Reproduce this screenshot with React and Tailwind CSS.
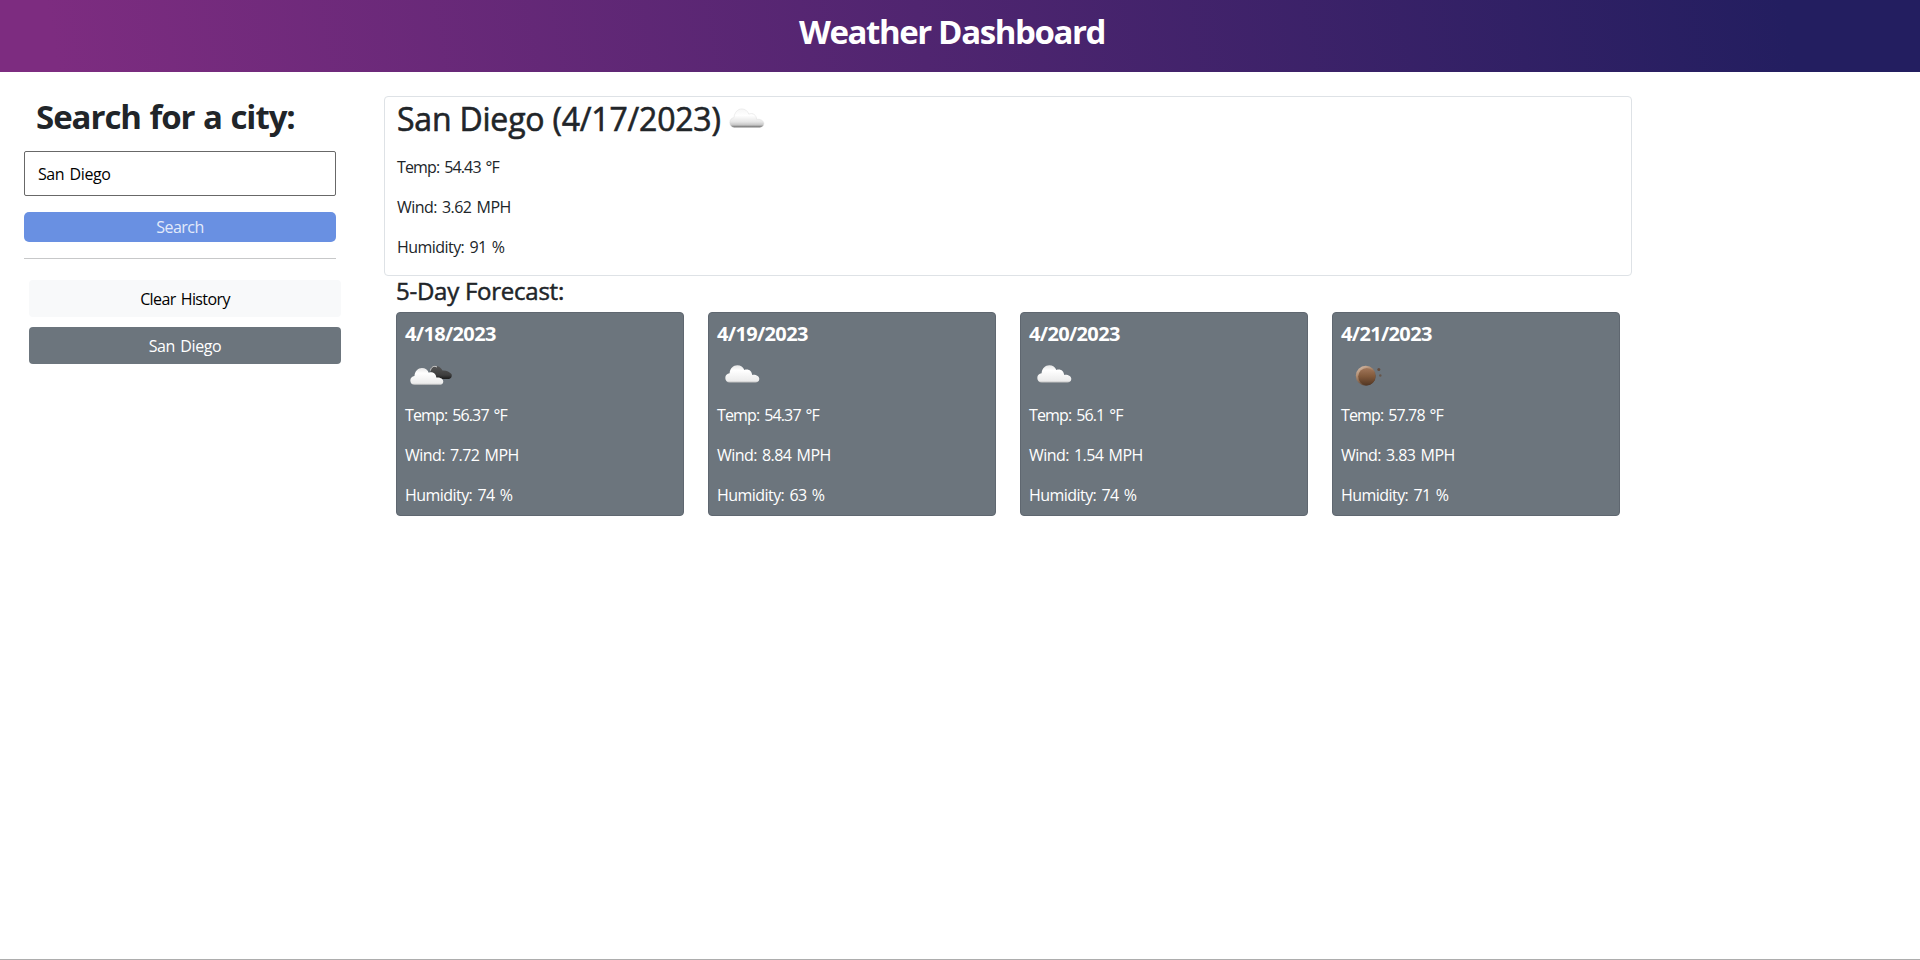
import React from "react";

const forecast = [
  { date: "4/18/2023", icon: "broken", temp: "56.37", wind: "7.72", humidity: "74" },
  { date: "4/19/2023", icon: "cloud", temp: "54.37", wind: "8.84", humidity: "63" },
  { date: "4/20/2023", icon: "cloud", temp: "56.1", wind: "1.54", humidity: "74" },
  { date: "4/21/2023", icon: "night", temp: "57.78", wind: "3.83", humidity: "71" },
];

const CLOUD =
  "M4.5 17.5 C1.8 17.5 0 15.6 0 13 C0 10.4 1.8 8.7 4.3 8.4 C4.6 3.6 8 .4 12 .4 C15.4 .4 18 2.4 19 5.2 C23 3.6 26.6 6 26.8 10 C31 9.6 34 11.4 34 14 C34 16.2 32.4 17.5 30 17.5 Z";

function CloudDefs({ id }) {
  return (
    <defs>
      <linearGradient id={id} x1="0" y1="0" x2="0" y2="1">
        <stop offset="0" stopColor="#f6f6f6" />
        <stop offset="0.35" stopColor="#ffffff" />
        <stop offset="0.7" stopColor="#e6e6e6" />
        <stop offset="0.87" stopColor="#c6c6c6" />
        <stop offset="1" stopColor="#606060" />
      </linearGradient>
      <linearGradient id={id + "-dark"} x1="0" y1="0" x2="0" y2="1">
        <stop offset="0" stopColor="#555555" />
        <stop offset="0.7" stopColor="#3e3e3e" />
        <stop offset="1" stopColor="#1b1b1b" />
      </linearGradient>
      <linearGradient id={id + "-lit"} x1="0" y1="0" x2="0" y2="1">
        <stop offset="0" stopColor="#e6e6e6" />
        <stop offset="0.3" stopColor="#ffffff" />
        <stop offset="0.9" stopColor="#ececec" />
        <stop offset="1" stopColor="#c4c4c4" />
      </linearGradient>
      <linearGradient id={id + "-moon"} x1="0" y1="0" x2="0" y2="1">
        <stop offset="0" stopColor="#a1765a" />
        <stop offset="0.5" stopColor="#80583a" />
        <stop offset="1" stopColor="#533724" />
      </linearGradient>
      <linearGradient id={id + "-rim"} x1="0" y1="0" x2="0.6" y2="1">
        <stop offset="0" stopColor="#e3cdbd" />
        <stop offset="0.45" stopColor="#a98467" />
        <stop offset="1" stopColor="#4b3629" />
      </linearGradient>
    </defs>
  );
}

function WeatherIcon({ kind, id }) {
  return (
    <svg className="block h-[50px] w-[50px]" viewBox="0 0 50 50">
      <CloudDefs id={id} />
      {kind === "broken" && (
        <g>
          <path d="M26 24 C24.500 18 27 15 30.500 16 C34 16 36 18 37.500 20.500 C41 20 44.500 22 46.500 24 C47.500 27 45.500 29 43 29 L33 29 Z" fill={"url(#" + id + "-dark)"} />
          <path d="M25.500 20.500 C26 17 29 15.300 32 17" fill="none" stroke="#d8d8d8" strokeWidth="1" />
          <path d={CLOUD} transform="translate(5.300 17.700) scale(.97 .98)" fill={"url(#" + id + "-lit)"} />
        </g>
      )}
      {kind === "cloud" && (
        <path d={CLOUD} transform="translate(8.300 14.900)" fill={"url(#" + id + "-lit)"} />
      )}
      {kind === "shaded" && (
        <path d={CLOUD} transform="translate(6.800 14.500) scale(1 1.080)" fill={"url(#" + id + ")"} stroke="#d9d9d9" strokeWidth=".4" />
      )}
      {kind === "night" && (
        <g>
          <circle cx="24.800" cy="25.800" r="10" fill={"url(#" + id + "-rim)"} />
          <circle cx="25.800" cy="26.600" r="8.600" fill={"url(#" + id + "-moon)"} />
          <circle cx="37.800" cy="19.500" r="1.500" fill="#634b3c" />
          <circle cx="39.300" cy="25.500" r="1.200" fill="#66564b" />
        </g>
      )}
    </svg>
  );
}

function Reading({ label, value, className }) {
  return (
    <p className={"h-10 whitespace-nowrap text-[16px] leading-6 [word-spacing:1.5px] " + className}>
      {label}: {value}
    </p>
  );
}

function Readings({ temp, wind, humidity }) {
  return (
    <div>
      <Reading label="Temp" value={temp + " °F"} className="tracking-[-0.85px]" />
      <Reading label="Wind" value={wind + " MPH"} className="tracking-[-0.55px]" />
      <Reading label="Humidity" value={humidity + " %"} className="tracking-[-0.55px]" />
    </div>
  );
}

function ForecastCard({ day, index }) {
  return (
    <article className="h-[204px] w-[288px] rounded-[4px] border border-[#5f6770] bg-[#6c757d] px-2 pt-[9px] text-white">
      <h4 className="text-[20px] font-bold leading-6 tracking-[-0.65px]">{day.date}</h4>
      <div className="mt-[4px] h-[53px]">
        <WeatherIcon kind={day.icon} id={"day" + index} />
      </div>
      <Readings temp={day.temp} wind={day.wind} humidity={day.humidity} />
    </article>
  );
}

export default function App() {
  return (
    <div className="flex h-[960px] w-[1920px] flex-col overflow-hidden border-b border-[#adadad] bg-white font-['Open_Sans','Noto_Sans',sans-serif] text-[#212529]">
      <header className="flex h-[72px] shrink-0 justify-center bg-[linear-gradient(80deg,#7d2c80_3%,#231e60_93%)] pt-[11px]">
        <h1 className="-ml-4 whitespace-nowrap text-[33px] font-bold leading-[42px] tracking-[-1.4px] text-white">Weather Dashboard</h1>
      </header>
      <div className="flex">
        <aside className="w-[384px] shrink-0 pl-6 pt-6">
          <h2 className="h-[55px] whitespace-nowrap pl-3 text-[33px] font-bold leading-[42px] tracking-[-1.05px] [word-spacing:1px]">Search for a city:</h2>
          <input
            className="block h-[45px] w-[312px] rounded-[2px] border border-[#686868] bg-white px-[13px] text-[16px] tracking-[-0.4px] [word-spacing:1.5px] text-black outline-none"
            defaultValue="San Diego"
          />
          <button className="mt-4 block h-[30px] w-[312px] rounded-[5px] bg-[#6990e2] text-[16px] leading-[30px] tracking-[-0.5px] text-[#e3eafa]">Search</button>
          <hr className="mt-4 w-[312px] border-t border-[#c7c8c9]" />
          <div className="ml-[5px] mt-[21px] flex w-[312px] flex-col gap-[10px] text-[16px]">
            <button className="h-[37px] rounded-[4px] bg-[#f8f9fa] pt-px tracking-[-0.6px] [word-spacing:1.5px] text-black">Clear History</button>
            <button className="h-[37px] rounded-[4px] bg-[#6c757d] pt-px tracking-[-0.4px] [word-spacing:1.5px] text-white">San Diego</button>
          </div>
        </aside>
        <main className="w-[1248px] pt-6">
          <section className="h-[180px] rounded-[4px] border border-[#dee2e6] px-3">
            <div className="flex h-[58px] items-start">
              <h2 className="mt-[3px] w-[326px] whitespace-nowrap text-[32px] leading-[38px] tracking-[-0.2px] [-webkit-text-stroke:0.6px_#212529]">San Diego (4/17/2023)</h2>
              <div className="-mt-[3px]">
                <WeatherIcon kind="shaded" id="today" />
              </div>
            </div>
            <Readings temp="54.43" wind="3.62" humidity="91" />
          </section>
          <h3 className="h-9 pl-3 text-[24px] leading-[30px] tracking-[-0.25px] [-webkit-text-stroke:0.5px_#212529]">5-Day Forecast:</h3>
          <div className="flex gap-6 pl-3">
            {forecast.map((day, i) => (
              <ForecastCard key={day.date} day={day} index={i} />
            ))}
          </div>
        </main>
      </div>
    </div>
  );
}
